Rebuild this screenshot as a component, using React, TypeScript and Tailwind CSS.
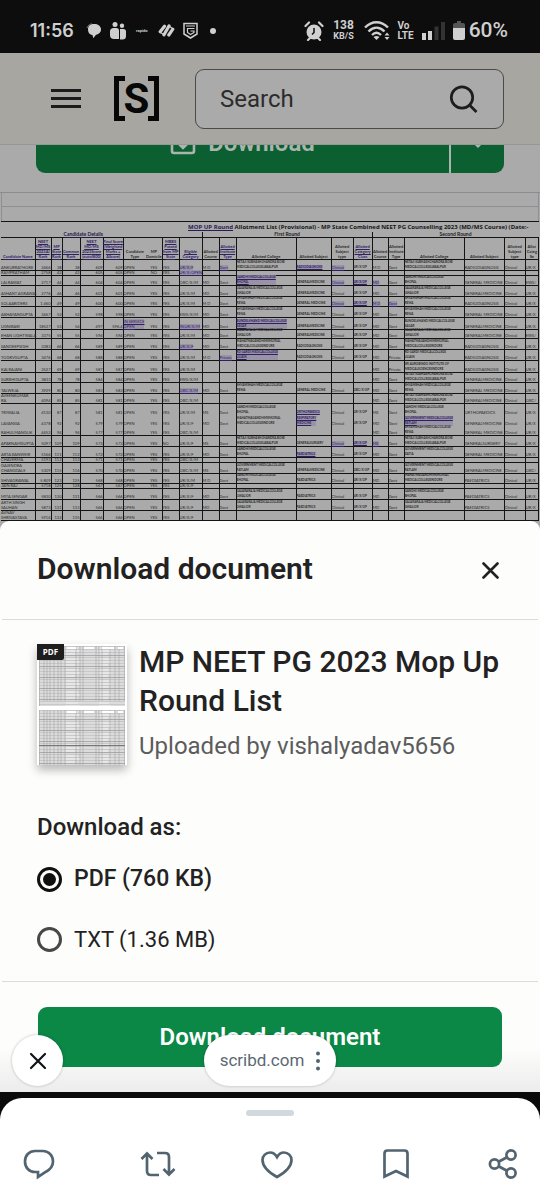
const COLUMNS = [
  { label: "Candidate Name", width: 34, hl: true },
  { label: "NEET\nMD/MS\n2023AI\nRank", width: 16, hl: true },
  { label: "MP\nState\nRank", width: 11, hl: true },
  { label: "Common\nRank", width: 18, hl: true },
  { label: "NEET\nMD/MS\n2023Score\n(outof800)", width: 23, hl: true },
  { label: "Final Score\n(Weighted\nMarks +\nAScore)", width: 20, hl: true },
  { label: "Candidate\nType", width: 23, hl: false },
  { label: "MP\nDomicile", width: 16, hl: false },
  { label: "MBBS\nPassed\nfrom MP\nState", width: 17, hl: true },
  { label: "Eligible\nCategory", width: 23, hl: true },
  { label: "Allotted\nCourse", width: 17, hl: false },
  { label: "Allotted\nInstitute\nType", width: 17, hl: true },
  { label: "Allotted College", width: 60, hl: false },
  { label: "Allotted Subject", width: 35, hl: false },
  { label: "Allotted\nSubject\ntype", width: 22, hl: false },
  { label: "Allotted\nCategory\nClass", width: 19, hl: true },
  { label: "Allotted\nCourse", width: 16, hl: false },
  { label: "Allotted\nInstitute\nType", width: 16, hl: false },
  { label: "Allotted College", width: 60, hl: false },
  { label: "Allotted Subject", width: 40, hl: false },
  { label: "Allotted\nSubject\ntype", width: 21, hl: false },
  { label: "Allot\nCateg\nSe", width: 13, hl: false },
];

const NETAJI = "NETAJI SUBHASHCHANDRA BOSE\nMEDICALCOLLEGEJABALPUR";
const GANDHI = "GANDHI MEDICALCOLLEGE\nBHOPAL";
const GAJRA = "GAJARARAJA MEDICALCOLLEGE\nGWALIOR";
const SHYAM = "SHYAMSHAH MEDICALCOLLEGE\nREWA";
const BUNDEL = "BUNDELKHAND MEDICALCOLLEGE\nSAGAR";
const MGM = "MAHATMAGANDHIMEMORIAL\nMEDICALCOLLEGEINDORE";
const RDG = "RD GARDI MEDICALCOLLEGE\nUJJAIN";
const SRI = "SRI AUROBINDO INSTITUTE OF\nMEDICALSCIENCESINDORE";
const RATLAM = "GOVERNMENT MEDICALCOLLEGE\nRATLAM";
const DATIA = "GOVERNMENT MEDICALCOLLEGE\nDATIA";

type Row = {
  h: number;
  who: string[]; // name, ranks, scores, type, domicile, mbbs, category
  first?: string[];
  second?: string[];
  hl?: number[];
  open?: boolean;
};

const ROWS: Row[] = [
  { h: 11, who: ["ANKURRATHORE", "2466", "38", "38", "609", "609", "OPEN", "YES", "YES", "UR/X/F"], first: ["M D", "Govt", NETAJI, "RADIODIAGNOSIS", "Clinical", "UR/X/OP"], second: ["M D", "Govt", NETAJI, "RADIODIAGNOSIS", "Clinical", "UR/X"], hl: [9, 11, 13, 14] },
  { h: 5, who: ["RAMPRATHAM", "2758", "42", "42", "605", "605", "OPEN", "NO", "YES", "UR/X/OPEN"], hl: [9] },
  { h: 10, who: ["LALRAWAT", "2717", "44", "44", "604", "604", "OPEN", "YES", "YES", "OBC/X/M"], first: ["MD", "Govt", GANDHI, "GENERALMEDICINE", "Clinical", "UR/X/OP"], second: ["MD", "Govt", GANDHI, "GENERAL MEDICINE", "Clinical", "EWS/"], hl: [12, 14, 15, 16] },
  { h: 11, who: ["ASHANT AGRAWAL", "2776", "46", "46", "601", "601", "OPEN", "YES", "YES", "UR/X/M"], first: ["MD", "Govt", GAJRA, "GENERALMEDICINE", "Clinical", "UR/X/OP"], second: ["MD", "Govt", GAJRA, "GENERALMEDICINE", "Clinical", "UR/X"] },
  { h: 10, who: ["SOLAARIDERS", "1 460", "49", "49", "600", "600", "OPEN", "YES", "YES", "UR/X/M"], first: ["M D", "Govt", SHYAM, "GENERAL MEDICINE", "Clinical", "UR/X/OP"], second: ["M D", "Govt", SHYAM, "RADIODIAGNOSIS", "Clinical", "UR/X"], hl: [14, 15, 16, 17] },
  { h: 11, who: ["ABHAYANGUPTA", "3467", "52", "52", "598", "598", "OPEN", "YES", "YES", "EWS/X/M"], first: ["MD", "Govt", SHYAM, "GENERAL MEDICINE", "Clinical", "UR/X/OP"], second: ["MD", "Govt", SHYAM, "GENERAL MEDICINE", "Clinical", "UR/X"] },
  { h: 12, who: ["UGNIBARI", "18527", "53", "54", "497", "596.4", "IN SERVICE\nOPEN", "YES", "YES", "IN,UR/X/M"], first: ["MD", "Govt", BUNDEL, "GENERALMEDICINE", "Clinical", "UR/X/OP"], second: ["MD", "Govt", BUNDEL, "GENERALMEDICINE", "Clinical", "UR/X"], hl: [6, 9, 12] },
  { h: 9, who: ["EHAN LIGHTWALA", "3375", "55", "55", "594", "594", "OPEN", "YES", "YES", "UR/X/M"], first: ["MD", "Govt", GAJRA, "GENERALMEDICINE", "Clinical", "UR/X/OP"], second: ["MD", "Govt", GAJRA, "GENERALMEDICINE", "Clinical", "EWS/"] },
  { h: 11, who: ["SANDEEPSIGH", "3383", "66", "66", "589", "589", "OPEN", "YES", "YES", "UR/X/F"], first: ["MD", "Govt", MGM, "RADIODIAGNOSIS", "Clinical", "UR/X/OP"], second: ["MD", "Govt", MGM, "RADIODIAGNOSIS", "Clinical", "UR/X"], hl: [9] },
  { h: 11, who: ["YOGRVGUPTA", "3476", "68", "68", "588", "588", "OPEN", "YES", "YES", "UR/X/M"], first: ["M D", "Private", RDG, "RADIODIAGNOSIS", "Clinical", "UR/X/OP"], second: ["MD", "Private", RDG, "RADIODIAGNOSIS", "Clinical", "UR/X"], hl: [11, 12] },
  { h: 12, who: ["KALRAJANI", "3527", "69", "69", "587", "587", "OPEN", "YES", "YES", "UR/X/M"], second: ["MD", "Private", SRI, "RADIODIAGNOSIS", "Clinical", "UR/X"] },
  { h: 10, who: ["SURBHIGUPTA", "3833", "78", "78", "584", "584", "OPEN", "YES", "YES", "EWS/X/M"], second: ["MD", "Govt", NETAJI, "GENERALMEDICINE", "Clinical", "UR/X"] },
  { h: 11, who: ["TALWEJA", "3929", "80", "80", "583", "583", "OPEN", "YES", "YES", "OBC/X/M"], first: ["MD", "Govt", SHYAM, "GENERAL MEDICINE", "Clinical", "OBC/X/OP"], second: ["MD", "Govt", SHYAM, "GENERAL MEDICINE", "Clinical", "UR/X"], hl: [9] },
  { h: 10, who: ["AVEENKUMAR\nRA", "4094", "85", "85", "581", "581", "OPEN", "YES", "YES", "OBC/X/M"], second: ["MD", "Govt", NETAJI, "GENERALMEDICINE", "Clinical", "OBC/"] },
  { h: 11, open: true, who: ["TRIWALIA", "4130", "87", "87", "581", "581", "OPEN", "YES", "YES", "UR/X/M"], first: ["MS", "Govt", GANDHI, "ORTHOPAEDICS", "Clinical", "UR/X/OP"], second: ["MS", "Govt", GANDHI, "ORTHOPAEDICS", "Clinical", "UR/X"], hl: [13] },
  { h: 11, open: true, who: ["LAVANSIA", "4378", "92", "92", "579", "579", "OPEN", "YES", "YES", "UR/X/F"], first: ["MD", "Govt", MGM, "RESPIRATORY\nMEDICINE", "Clinical", "UR/X/OP"], second: ["MD", "Govt", RATLAM, "GENERALMEDICINE", "Clinical", "UR/X"], hl: [13, 18] },
  { h: 10, who: ["RAHULMANGLIK", "4452", "94", "94", "577", "577", "OPEN", "YES", "YES", "OBC/X/M"], second: ["MD", "Govt", SHYAM, "GENERAL MEDICINE", "Clinical", "UR/X"] },
  { h: 11, who: ["APARNAMGUPTA", "5097", "109", "109", "573", "573", "OPEN", "YES", "NO", "UR/X/F"], first: ["MS", "Govt", NETAJI, "GENERALSURGERY", "Clinical", "UR/X/OP"], second: ["MS", "Govt", NETAJI, "GENERALSURGERY", "Clinical", "UR/X"], hl: [14, 15, 16] },
  { h: 11, who: ["ARTA BANWEIR", "5166", "111", "112", "572", "572", "OPEN", "YES", "YES", "UR/X/F"], first: ["MD", "Govt", GANDHI, "PAEDIATRICS", "Clinical", "UR/X/OP"], second: ["MD", "Govt", DATIA, "GENERAL MEDICINE", "Clinical", "UR/X"], hl: [13] },
  { h: 5, who: ["CHAVERMA", "5193", "112", "113", "571", "571", "OPEN", "YES", "YES", "OBC/X/M"] },
  { h: 11, who: ["GAJENDRA\nCHANGDALE", "5309", "115", "116", "570", "570", "OPEN", "YES", "YES", "OBC/X/M"], first: ["MS", "Govt", RATLAM, "GENERALMEDICINE", "Clinical", "OBC/X/OP"], second: ["MD", "Govt", RATLAM, "GENERALMEDICINE", "Clinical", "OBC/"] },
  { h: 10, who: ["SHIVAGRAWAL", "5 809", "123", "125", "568", "568", "OPEN", "YES", "YES", "UR/X/M"], first: ["M D", "Govt", GANDHI, "PAEDIATRICS", "Clinical", "UR/X/OP"], second: ["MD", "Govt", MGM, "PAEDIATRICS", "Clinical", "UR/X"] },
  { h: 5, who: ["JAIN RAJ", "5718", "125", "128", "567", "567", "OPEN", "YES", "YES", "UR/X/F"] },
  { h: 11, who: ["MITA SENGAR", "5830", "130", "131", "566", "566", "OPEN", "YES", "YES", "UR/X/F"], first: ["MD", "Govt", GAJRA, "PAEDIATRICS", "Clinical", "UR/X/OP"], second: ["MD", "Govt", GANDHI, "PAEDIATRICS", "Clinical", "UR/X"] },
  { h: 11, who: ["ARTH SINGH\nSAUHAN", "5873", "131", "133", "566", "566", "OPEN", "YES", "YES", "UR/X/F"], first: ["MD", "Govt", GAJRA, "PAEDIATRICS", "Clinical", "UR/X/OP"], second: ["MD", "Govt", GAJRA, "PAEDIATRICS", "Clinical", "UR/X"] },
  { h: 10, who: ["AVNAV\nSHRIVASTAVA", "5916", "132", "135", "566", "566", "OPEN", "YES", "YES", "UR/X/F"] },
];

const BLANK = ["", "", "", "", "", ""];
const NUMERIC = [1, 2, 3, 4, 5];
const WIDE = [12, 13, 15, 18];

function StatusBar() {
  return (
    <div className="flex h-[53px] items-center justify-between bg-[#0d0d0d] pr-8 pl-[30px] pt-2 text-[#cfcfcf]">
      <div className="flex items-center gap-2">
        <span className="mr-1 font-['Inter','Liberation_Sans',sans-serif] text-[18px] font-semibold leading-none">11:56</span>
        <svg width="16" height="16" viewBox="0 0 16 16" fill="currentColor" aria-hidden="true">
          <path d="M8 1c4 0 7 2 7 5.500C15 10 12 11 10 12c-1 .6-1.500 2-2.500 3-.8-.8-.7-2-1-3C3 11.500 2 9 2 6 2 3 4 1 8 1Z" />
          <path d="M1 5C1.500 2.500 4 1 6 .8" stroke="#777" fill="none" />
        </svg>
        <svg width="16" height="18" viewBox="0 0 16 18" fill="currentColor" aria-hidden="true">
          <circle cx="5" cy="2.600" r="2.500" />
          <circle cx="12" cy="3.800" r="2.200" />
          <path d="M3.500 6h3C8 6 9 7 9 8.500V17H4a4 4 0 0 1-4-4V9.500C0 7.500 1.500 6 3.500 6Z" />
          <path d="M10 7h3.500C15 7 16 8 16 9.500V14a3.500 3.500 0 0 1-3.500 3.500H10Z" />
        </svg>
        <span className="w-4 text-center text-[4px] font-bold leading-none">rapido</span>
        <svg width="17" height="15" viewBox="0 0 17 15" fill="none" stroke="currentColor" strokeWidth="3.200" strokeLinecap="round" aria-hidden="true">
          <path d="M2.200 8.800 6.500 3.200M6 11.800 11 3M10.800 12 14.800 6.200" />
          <path d="m2.500 9.500 3.500 2.300M11 3l3.800 2.800" strokeWidth="1.200" />
        </svg>
        <svg width="15" height="17" viewBox="0 0 15 17" fill="none" stroke="currentColor" strokeWidth="1.500" aria-hidden="true">
          <path d="M1 1.500h13V12l-6.500 4L1 12Z" />
          <path d="M3 4h9M11.500 6.500H4.500v4l3 2 3.500-2V9H7.500" strokeWidth="1.200" />
        </svg>
        <span className="ml-1 size-1.5 rounded-full bg-current" />
      </div>
      <div className="flex items-center gap-2">
        <svg width="20" height="20" viewBox="0 0 20 20" fill="none" aria-hidden="true">
          <circle cx="10" cy="11" r="7.500" fill="currentColor" />
          <path d="M1.500 5 5 1.500M18.500 5 15 1.500M4 19l2-2M16 19l-2-2" stroke="currentColor" strokeWidth="2.200" strokeLinecap="round" />
          <path d="M10 7v4.500L8 13.500" stroke="#0d0d0d" strokeWidth="1.500" />
        </svg>
        <div className="flex w-6 flex-col items-center font-bold">
          <span className="text-[12px] leading-[11px]">138</span>
          <span className="text-[9px] leading-[10px]">KB/S</span>
        </div>
        <svg width="26" height="20" viewBox="0 0 26 20" fill="none" stroke="currentColor" strokeWidth="2.400" aria-hidden="true">
          <path d="M1 6.500c7-7 16-7 23 0M4.500 10.500c5-5 11-5 16 0M8 14c3-3 6-3 9 0" />
          <path d="m12.500 19-3-3c2-1.500 4-1.500 6 0Z" fill="currentColor" stroke="none" />
          <path d="m23 11.500 2.500 3h-5ZM23 19l2.500-3h-5Z" fill="currentColor" stroke="none" />
        </svg>
        <div className="flex flex-col items-start text-[10px] font-bold leading-[10px]">
          <span>Vo</span>
          <span>LTE</span>
        </div>
        <svg width="23" height="18" viewBox="0 0 23 18" aria-hidden="true">
          <path d="M0 11h4v7H0ZM6 9h4v9H6Z" fill="currentColor" />
          <path d="M12.500 4.500h4V18h-4ZM19 0h4v18h-4Z" fill="#333" />
        </svg>
        <div className="flex items-center gap-1">
          <svg width="12" height="19" viewBox="0 0 12 19" aria-hidden="true">
            <path d="M4 0h4v2h2a2 2 0 0 1 2 2v4H0V4a2 2 0 0 1 2-2h2Z" fill="#555" />
            <path d="M0 7h12v10a2 2 0 0 1-2 2H2a2 2 0 0 1-2-2Z" fill="currentColor" />
          </svg>
          <span className="text-[21px] font-medium leading-none">60%</span>
        </div>
      </div>
    </div>
  );
}

function SiteHeader() {
  return (
    <header className="flex h-[92px] items-center border-b border-[#979797] bg-[#a8a6a1] pr-9 pl-[51px]">
      <button aria-label="Menu" className="flex w-[30px] flex-col gap-[5px]">
        <span className="h-[3px] bg-[#1c1c1c]" />
        <span className="h-[3px] bg-[#1c1c1c]" />
        <span className="h-[3px] bg-[#1c1c1c]" />
      </button>
      <a href="#home" aria-label="Scribd" className="ml-[33px] flex h-[45px] w-[45px] justify-between text-[#070707]">
        <span className="w-[11px] border-y-5 border-l-5 border-current" />
        <span className="flex w-[23px] items-center justify-center text-[42px] font-bold leading-none">S</span>
        <span className="w-[11px] border-y-5 border-r-5 border-current" />
      </a>
      <div className="ml-9 flex h-[60px] min-w-0 flex-1 items-center rounded-[9px] border border-[#4a4a4a] bg-[#aaaaaa] pr-6 pl-6">
        <input
          type="text"
          aria-label="Search"
          placeholder="Search"
          className="min-w-0 flex-1 bg-transparent text-[24px] text-[#2c2c2c] outline-none placeholder:text-[#2c2c2c]"
        />
        <button aria-label="Submit search">
          <svg width="30" height="30" viewBox="0 0 30 30" fill="none" stroke="#1c1c1c" strokeWidth="2.700" aria-hidden="true">
            <circle cx="13" cy="13.500" r="10.700" />
            <path d="m20.500 21 7 7" />
          </svg>
        </button>
      </div>
    </header>
  );
}

function DownloadBar() {
  return (
    <div className="flex h-7 items-end overflow-hidden px-9">
      <div className="flex h-[60px] w-full overflow-hidden rounded-[9px] bg-[#0b5f31] text-[#a9b5ad]">
        <button className="flex flex-1 items-center justify-center gap-3 text-[24px] font-semibold">
          <svg width="26" height="26" viewBox="0 0 26 26" fill="none" stroke="currentColor" strokeWidth="2.600" aria-hidden="true">
            <path d="M2 14v7q0 2 2 2h18q2 0 2-2v-7M13 1v16M7 12l6 6 6-6" />
          </svg>
          Download
        </button>
        <button aria-label="More download options" className="flex w-[55px] items-center justify-center border-l-2 border-[#a9b5ad]">
          <svg width="16" height="12" viewBox="0 0 16 12" fill="none" stroke="currentColor" strokeWidth="3" aria-hidden="true">
            <path d="m1 2 7 7 7-7" />
          </svg>
        </button>
      </div>
    </div>
  );
}

function DocumentTable() {
  return (
    <div className="mt-[19px] overflow-hidden border-t border-[#8c8c8c] px-px font-['Lato','Liberation_Sans',sans-serif] text-[4px] leading-[5px] text-[#2c2c2c]">
      <div className="h-[14px] border-b border-x border-[#8c8f94]" />
      <div className="h-[14px] border-x border-[#8c8f94]" />
      <table className="w-full table-fixed border-collapse border-y border-[#141414]">
        <colgroup>
          {COLUMNS.map((col, i) => (
            <col key={i} style={{ width: col.width }} />
          ))}
        </colgroup>
        <thead>
          <tr className="h-[10px] font-['Open_Sans',sans-serif] text-[6px] font-bold leading-[9px] text-[#161616]">
            <td colSpan={9} className="p-0" />
            <td colSpan={13} className="whitespace-nowrap p-0 pl-[9px] align-bottom">
              <span className="text-[#2b1c52] underline">MOP UP Round</span> Allotment List (Provisional) - MP State Combined NEET PG
              Counselling 2023 (MD/MS Course) (Date:-
            </td>
          </tr>
          <tr className="h-[6px] border-b border-[#141414] text-[5px] font-bold text-[#222]">
            <th colSpan={10} className="border-r border-[#141414] p-0 text-center text-[#241a44] underline">
              <span className="pr-9">Candidate Details</span>
            </th>
            <th colSpan={6} className="border-r border-[#141414] p-0">First Round</th>
            <th colSpan={6} className="p-0">Second Round</th>
          </tr>
          <tr>
            {COLUMNS.map((col, i) => (
              <th
                key={i}
                className={`whitespace-pre border-b border-[#141414] p-0 align-bottom text-center ${
                  i === 6 ? "" : "border-r"
                } ${col.hl ? "text-[#2f2160] underline" : ""}`}
              >
                <div className="flex h-[21px] items-end justify-center">{col.label}</div>
              </th>
            ))}
          </tr>
        </thead>
        <tbody>
          {ROWS.map((row, r) => {
            const cells = [...row.who, ...(row.first ?? BLANK), ...(row.second ?? BLANK)];
            return (
              <tr key={r}>
                {cells.map((cell, i) => (
                  <td
                    key={i}
                    className={`whitespace-pre border-[#141414] p-0 ${i === 6 ? "" : "border-r"} ${row.open ? "" : "border-b"} ${
                      WIDE.includes(i) ? "text-[3px] font-bold" : ""
                    }`}
                  >
                    <div
                      className={`flex items-end ${NUMERIC.includes(i) ? "justify-end" : ""} ${i === 7 ? "justify-center" : ""}`}
                      style={{ height: row.open ? row.h : row.h - 1 }}
                    >
                      <span className={row.hl?.includes(i) ? "bg-[#9a93a8] text-[#2f2160] underline" : ""}>{cell}</span>
                    </div>
                  </td>
                ))}
              </tr>
            );
          })}
        </tbody>
      </table>
    </div>
  );
}

function Thumbnail() {
  return (
    <div className="relative h-[121px] w-[90px] shrink-0 bg-white shadow-[0_5px_9px_rgba(0,0,0,0.28)]">
      <svg width="90" height="121" viewBox="0 0 90 121" aria-hidden="true">
        <defs>
          <pattern id="rows" width="86" height="11" patternUnits="userSpaceOnUse">
            <path d="M0 .5h86M0 3.500h86M0 6.500h86" stroke="#bbb" strokeWidth=".6" />
            <path d="M0 9.500h86" stroke="#8a8a8a" strokeWidth=".6" />
            <path d="M27 2h12M27 5h14M60 2h10M60 5h12M27 8h9M61 8h8" stroke="#f2f2f2" />
          </pattern>
        </defs>
        {[2, 66].map((y) => (
          <g key={y} transform={`translate(2 ${y})`}>
            <rect width="86" height={y === 2 ? 60 : 55} fill="#dcdcdc" />
            <rect width="86" height={y === 2 ? 60 : 55} fill="url(#rows)" />
            <path
              d={`M.5 0v${y === 2 ? 60 : 55}M5 0v55M8 0v55M11 0v55M15 0v55M19 0v55M22 0v55M26 0v55M37 0v55M41 0v55M44 0v55M57 0v55M60 0v55M63 0v55M71 0v55M76 0v55M80 0v55M85.500 0v55`}
              stroke="#9a9a9a"
              strokeWidth=".5"
            />
            <path d="M28 2h9M45 2h10M63 2h12M79 2h5" stroke="#fff" strokeWidth="2" />
          </g>
        ))}
        <path d="M2 101.500h86" stroke="#777" />
      </svg>
      <span className="absolute top-0 left-0 flex h-4 w-[27px] items-center justify-center rounded-br-[2px] bg-[#1e1e1e] font-['Open_Sans',sans-serif] text-[8px] font-bold text-white">
        PDF
      </span>
    </div>
  );
}

function FormatOption({ label, checked }: { label: string; checked?: boolean }) {
  return (
    <label className={`flex h-[60px] items-center gap-3 text-[#222] ${checked ? "text-[23px] font-medium" : "text-[22px]"}`}>
      <input
        type="radio"
        name="format"
        defaultChecked={checked}
        className="size-[25px] appearance-none rounded-full border-3 border-[#484848] checked:border-[#101010] checked:bg-[#101010] checked:bg-clip-content checked:p-[3px]"
      />
      {label}
    </label>
  );
}

function DownloadSheet() {
  return (
    <section role="dialog" aria-labelledby="sheet-title" className="relative rounded-t-[9px] bg-[#fdfdfc]">
      <div className="mx-0.5 flex h-[99px] items-center justify-between border-b border-[#dcdcdc] pr-9 pl-[35px]">
        <h2 id="sheet-title" className="pb-1 text-[30px] font-semibold text-[#222]">
          Download document
        </h2>
        <button aria-label="Close dialog" className="pr-[3px]">
          <svg width="17" height="17" viewBox="0 0 17 17" fill="none" stroke="#222" strokeWidth="2.600" strokeLinecap="round" aria-hidden="true">
            <path d="m1.500 1.500 14 14m0-14-14 14" />
          </svg>
        </button>
      </div>

      <div className="mx-0.5 border-b border-[#dcdcdc] pt-6 pr-9 pb-3 pl-[35px]">
        <div className="flex gap-3">
          <Thumbnail />
          <div className="-mt-0.5 min-w-0">
            <h3 className="text-[30px] font-medium leading-[39px] text-[#222]">MP NEET PG 2023 Mop Up Round List</h3>
            <p className="mt-[10px] text-[24px] leading-8 text-[#5c5c5c]">Uploaded by vishalyadav5656</p>
          </div>
        </div>
        <fieldset className="mt-[46px]">
          <legend className="text-[24px] font-medium leading-8 text-[#222]">Download as:</legend>
          <div className="mt-[6px]">
            <FormatOption label="PDF (760 KB)" checked />
            <FormatOption label="TXT (1.36 MB)" />
          </div>
        </fieldset>
      </div>

      <div className="bg-gradient-to-b from-[#fdfdfc] from-60% to-[#ececec] px-[38px] pt-[25px] pb-[25px]">
        <button className="h-[60px] w-full rounded-[9px] bg-[#0b8746] text-[24px] font-semibold text-white">Download document</button>
      </div>

      {/* Floating in-app browser controls */}
      <button
        aria-label="Close browser"
        className="absolute bottom-[6px] left-3 flex size-[51px] items-center justify-center rounded-full bg-white shadow-[0_0_3px_rgba(0,0,0,0.25)]"
      >
        <svg width="18" height="18" viewBox="0 0 18 18" fill="none" stroke="#0f1419" strokeWidth="2.200" strokeLinecap="round" aria-hidden="true">
          <path d="m2 2 14 14m0-14L2 16" />
        </svg>
      </button>
      <button className="absolute bottom-[6px] left-1/2 flex h-[51px] w-[132px] -translate-x-1/2 items-center justify-center gap-3 rounded-full bg-white text-[17px] text-[#5b6873] shadow-[0_0_3px_rgba(0,0,0,0.25)]">
        scribd.com
        <svg width="4" height="20" viewBox="0 0 4 20" fill="#536471" aria-hidden="true">
          <circle cx="2" cy="2.500" r="2" />
          <circle cx="2" cy="10" r="2" />
          <circle cx="2" cy="17.500" r="2" />
        </svg>
      </button>
    </section>
  );
}

function ActionBar() {
  return (
    <div className="bg-[#0a0a0a] pt-[6px]">
      <div className="rounded-t-[22px] bg-white pt-3 pb-[16px]">
        <div className="mx-auto h-[6px] w-12 rounded-full bg-[#cfd9de]" />
        <div className="mt-8 flex items-center gap-[71px] pr-[19px] pl-[21px] text-[#536471]">
          <div className="flex flex-1 justify-between">
            <button aria-label="Reply" className="flex w-9 justify-center">
              <svg width="34" height="32" viewBox="0 0 34 32" fill="none" stroke="currentColor" strokeWidth="2.700" aria-hidden="true">
                <path d="M13 3h8c6 0 10 5 10 10.500 0 5-3 8-7 10.200L16 29v-5h-3C7 24 3 19.500 3 13.500S7 3 13 3Z" />
              </svg>
            </button>
            <button aria-label="Repost" className="flex w-9 justify-center">
              <svg width="36" height="32" viewBox="0 0 36 32" fill="none" stroke="currentColor" strokeWidth="2.700" aria-hidden="true">
                <path d="m1.500 11 5.500-5.500L12.500 11M7 6v17q0 4 4 4h8M34.500 21 29 26.500 23.500 21M29 26V9q0-4-4-4h-8" />
              </svg>
            </button>
            <button aria-label="Like" className="flex w-9 justify-center">
              <svg width="34" height="32" viewBox="0 0 34 32" fill="none" stroke="currentColor" strokeWidth="2.700" aria-hidden="true">
                <path d="M17 9C15 5.500 12.500 4.500 10 4.500c-4 0-7.500 3.200-7.500 7.500C2.500 19 8 24 17 29c9-5 14.500-10 14.500-17 0-4.300-3.500-7.500-7.500-7.500-2.500 0-5 1-7 4.500Z" />
              </svg>
            </button>
            <button aria-label="Bookmark" className="flex w-9 justify-center">
              <svg width="28" height="32" viewBox="0 0 28 32" fill="none" stroke="currentColor" strokeWidth="2.700" aria-hidden="true">
                <path d="M2.500 5.500q0-3 3-3h17q3 0 3 3V28.500L14 23 2.500 28.500Z" />
              </svg>
            </button>
          </div>
          <button aria-label="Share" className="flex w-9 justify-center">
            <svg width="30" height="32" viewBox="0 0 30 32" fill="none" stroke="currentColor" strokeWidth="2.700" aria-hidden="true">
              <circle cx="6.500" cy="16" r="4.600" />
              <circle cx="23" cy="7" r="4.600" />
              <circle cx="23" cy="25" r="4.600" />
              <path d="m11 13.500 8-4.300M11 18.500l8 4.300" />
            </svg>
          </button>
        </div>
      </div>
    </div>
  );
}

export default function App() {
  return (
    <div className="bg-[#aaaaaa] font-['Roboto','Liberation_Sans',sans-serif]">
      <StatusBar />
      <SiteHeader />
      <main>
        <DownloadBar />
        <DocumentTable />
      </main>
      <DownloadSheet />
      <ActionBar />
    </div>
  );
}
